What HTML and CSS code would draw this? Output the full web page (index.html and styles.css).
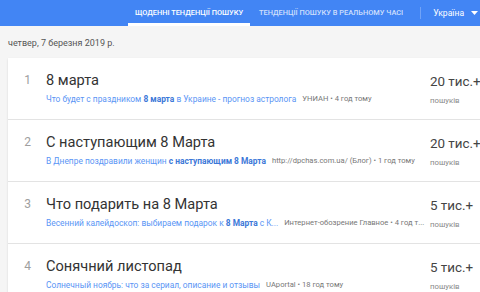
FILE: index.html
```html
<!DOCTYPE html>
<html lang="uk">
<head>
    <meta charset="UTF-8">
    <meta name="viewport" content="width=device-width, initial-scale=1.0">
    <title>Тенденції пошуку</title>
    <link rel="stylesheet" href="styles.css">
</head>
<body>
    <header class="topbar">
        <a class="tab active">ЩОДЕННІ ТЕНДЕНЦІЇ ПОШУКУ</a>
        <a class="tab">ТЕНДЕНЦІЇ ПОШУКУ В РЕАЛЬНОМУ ЧАСІ</a>
        <span class="sep"></span>
        <span class="country">Україна
            <svg width="7" height="4" viewBox="0 0 7 4"><path d="M0 0h7L3.5 4z" fill="#fff"/></svg>
        </span>
    </header>

    <div class="date">четвер, 7 березня 2019 р.</div>

    <!-- список трендів -->
    <div class="card">
        <div class="row">
            <div class="num">1</div>
            <div class="main">
                <div class="title">8 марта</div>
                <div class="sub"><span class="link">Что будет с праздником <b>8 марта</b> в Украине - прогноз астролога</span><span class="src">УНИАН • 4 год тому</span></div>
            </div>
            <div class="count">
                <div class="value">20 тис.+</div>
                <div class="label">пошуків</div>
            </div>
        </div>
        <div class="row">
            <div class="num">2</div>
            <div class="main">
                <div class="title">С наступающим 8 Марта</div>
                <div class="sub"><span class="link">В Днепре поздравили женщин <b>с наступающим 8 Марта</b></span><span class="src">http://dpchas.com.ua/ (Блог) • 1 год тому</span></div>
            </div>
            <div class="count">
                <div class="value">20 тис.+</div>
                <div class="label">пошуків</div>
            </div>
        </div>
        <div class="row">
            <div class="num">3</div>
            <div class="main">
                <div class="title">Что подарить на 8 Марта</div>
                <div class="sub"><span class="link">Весенний калейдоскоп: выбираем подарок к <b>8 Марта</b> с К...</span><span class="src">Интернет-обозрение Главное • 4 год т...</span></div>
            </div>
            <div class="count">
                <div class="value">5 тис.+</div>
                <div class="label">пошуків</div>
            </div>
        </div>
        <div class="row">
            <div class="num">4</div>
            <div class="main">
                <div class="title">Сонячний листопад</div>
                <div class="sub"><span class="link">Солнечный ноябрь: что за сериал, описание и отзывы</span><span class="src">UAportal • 18 год тому</span></div>
            </div>
            <div class="count">
                <div class="value">5 тис.+</div>
                <div class="label">пошуків</div>
            </div>
        </div>
    </div>
</body>
</html>
```

FILE: styles.css
```css
body {
    font-family: Roboto, 'Noto Sans', sans-serif;
    margin: 0;
    padding: 0;
    background-color: #f5f5f5;
    width: 480px;
    height: 292px;
    overflow: hidden;
}

.topbar {
    height: 26px;
    background-color: #4285f4;
    display: flex;
    align-items: stretch;
    padding-left: 128px;
    box-sizing: border-box;
}

.tab {
    display: flex;
    align-items: center;
    padding: 0 9px;
    font-size: 7.4px;
    font-weight: 500;
    color: rgba(255, 255, 255, 0.75);
    white-space: nowrap;
    border-bottom: 3px solid transparent;
    padding-top: 2px;
}

.tab.active {
    color: #fff;
    border-bottom-color: #fff;
    width: 104px;
    justify-content: center;
}

.sep {
    width: 1px;
    background-color: rgba(255, 255, 255, 0.25);
    margin: 7px 12px 7px 8px;
}

.country {
    display: flex;
    align-items: center;
    gap: 7px;
    color: #fff;
    font-size: 8.6px;
    white-space: nowrap;
}

.date {
    font-size: 9px;
    color: #555;
    padding: 12px 8px 0;
    height: 20px;
}

.card {
    margin-left: 8px;
    width: 480px;
    background-color: #fff;
    box-shadow: 0 1px 2px rgba(0, 0, 0, 0.12);
}

.row {
    display: flex;
    height: 62px;
    border-bottom: 1px solid #e3e3e3;
    box-sizing: border-box;
}

.num {
    width: 38px;
    padding-top: 13px;
    text-align: right;
    padding-right: 15px;
    box-sizing: border-box;
    font-size: 12px;
    line-height: 18px;
    color: #9e9e9e;
}

.main {
    width: 384px;
    padding-top: 13px;
    overflow: hidden;
}

.title {
    font-size: 14.6px;
    line-height: 18px;
    color: #333;
}

.sub {
    margin-top: 4px;
    font-size: 8.4px;
    line-height: 12px;
    white-space: nowrap;
    display: flex;
}

.link {
    color: #5a95f5;
}

.link b {
    color: #3c78d8;
    font-weight: 700;
}

.src {
    color: #777;
    font-size: 7.6px;
    margin-left: 6px;
}

.count {
    padding-top: 15px;
    white-space: nowrap;
}

.value {
    font-size: 13.4px;
    line-height: 18px;
    color: #444;
}

.label {
    margin-top: 4px;
    font-size: 7.8px;
    line-height: 12px;
    color: #888;
}
```
